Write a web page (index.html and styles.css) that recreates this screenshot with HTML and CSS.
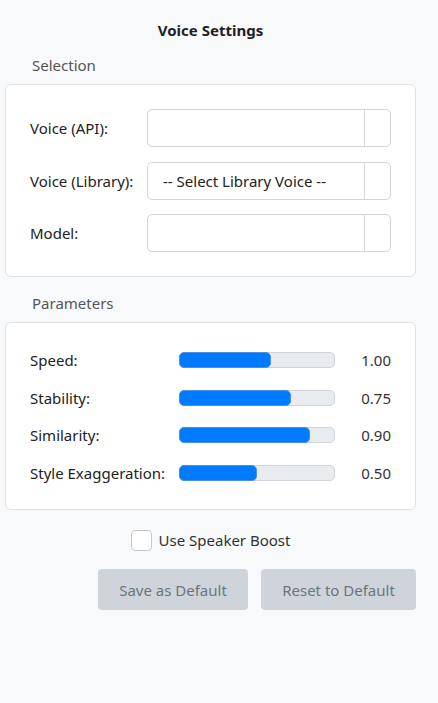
FILE: index.html
```html
<!DOCTYPE html>
<html>
<head>
<meta charset="utf-8">
<link rel="stylesheet" href="styles.css">
</head>
<body>
<div class="panel">
  <h1 class="title">Voice Settings</h1>

  <div class="section-head">Selection</div>
  <div class="card card-select">
    <div class="field">
      <label class="field-label">Voice (API):</label>
      <div class="select"><span class="select-text"></span><span class="select-arrow"></span></div>
    </div>
    <div class="field">
      <label class="field-label">Voice (Library):</label>
      <div class="select"><span class="select-text">-- Select Library Voice --</span><span class="select-arrow"></span></div>
    </div>
    <div class="field">
      <label class="field-label">Model:</label>
      <div class="select"><span class="select-text"></span><span class="select-arrow"></span></div>
    </div>
  </div>

  <div class="section-head section-head-2">Parameters</div>
  <div class="card card-params">
    <div class="param">
      <span class="param-label">Speed:</span>
      <div class="track"><div class="fill" style="width:92px"></div></div>
      <span class="param-value">1.00</span>
    </div>
    <div class="param">
      <span class="param-label">Stability:</span>
      <div class="track"><div class="fill" style="width:112px"></div></div>
      <span class="param-value">0.75</span>
    </div>
    <div class="param">
      <span class="param-label">Similarity:</span>
      <div class="track"><div class="fill" style="width:131px"></div></div>
      <span class="param-value">0.90</span>
    </div>
    <div class="param">
      <span class="param-label">Style Exaggeration:</span>
      <div class="track"><div class="fill" style="width:78px"></div></div>
      <span class="param-value">0.50</span>
    </div>
  </div>

  <div class="check-row">
    <span class="checkbox"></span>
    <span class="check-label">Use Speaker Boost</span>
  </div>

  <div class="buttons">
    <button class="btn btn-save">Save as Default</button>
    <button class="btn btn-reset">Reset to Default</button>
  </div>
</div>
</body>
</html>
```

FILE: styles.css
```css
html, body {
  margin: 0;
  padding: 0;
  background: #f8f9fa;
}
body {
  font-family: "Noto Sans", "Open Sans", sans-serif;
  font-size: 15px;
  color: #222;
  height: 703px;
}
.panel {
  width: 411px;
  margin-left: 5px;
  padding-top: 20px;
}
.title {
  margin: 0;
  font-size: 15px;
  font-weight: 700;
  line-height: 20px;
  text-align: center;
  color: #1e1e28;
}
.section-head {
  margin-top: 15px;
  padding-left: 27px;
  line-height: 20px;
  color: #555;
  font-size: 15px;
}
.section-head-2 {
  margin-top: 16px;
}
.card {
  margin-top: 9px;
  background: #fff;
  border: 1px solid #dee2e6;
  border-radius: 6px;
  box-sizing: border-box;
}
.card-select {
  padding: 24px 24px 24px 24px;
  display: flex;
  flex-direction: column;
  gap: 14.5px;
}
.field {
  display: flex;
  align-items: center;
  height: 38px;
}
.field-label {
  width: 117px;
  flex: none;
  white-space: nowrap;
}
.select {
  flex: 1;
  height: 38px;
  box-sizing: border-box;
  border: 1px solid #d4d4d4;
  border-radius: 5px;
  display: flex;
  align-items: center;
}
.select-text {
  flex: 1;
  padding-left: 15px;
  white-space: nowrap;
}
.select-arrow {
  width: 25px;
  align-self: stretch;
  border-left: 1px solid #d9d9d9;
}
.card-params {
  padding: 25px 24px 24px 24px;
  display: flex;
  flex-direction: column;
  gap: 13.7px;
}
.param {
  display: flex;
  align-items: center;
  height: 24px;
}
.param-label {
  width: 149px;
  flex: none;
  white-space: nowrap;
}
.track {
  width: 156px;
  height: 16px;
  flex: none;
  box-sizing: border-box;
  background: #e9ecef;
  border: 1px solid #ced4da;
  border-radius: 5px;
  position: relative;
}
.fill {
  position: absolute;
  left: -1px;
  top: -1px;
  bottom: -1px;
  background: #007bff;
  border-radius: 5px;
  border: 1px solid #4a90e2;
  box-sizing: border-box;
}
.param-value {
  flex: 1;
  text-align: right;
  color: #333;
}
.check-row {
  margin-top: 20px;
  display: flex;
  justify-content: center;
  align-items: center;
  height: 20px;
  gap: 7px;
}
.checkbox {
  width: 21px;
  height: 21px;
  box-sizing: border-box;
  background: #fff;
  border: 1px solid #c8c8c8;
  border-radius: 4px;
}
.check-label {
  color: #333;
}
.buttons {
  margin-top: 19px;
  display: flex;
  justify-content: flex-end;
  gap: 13px;
}
.btn {
  height: 41px;
  border: none;
  border-radius: 4px;
  background: #ced4da;
  color: #6c757d;
  font-family: inherit;
  font-size: 15px;
  padding: 0;
}
.btn-save {
  width: 150px;
}
.btn-reset {
  width: 155px;
}
```
